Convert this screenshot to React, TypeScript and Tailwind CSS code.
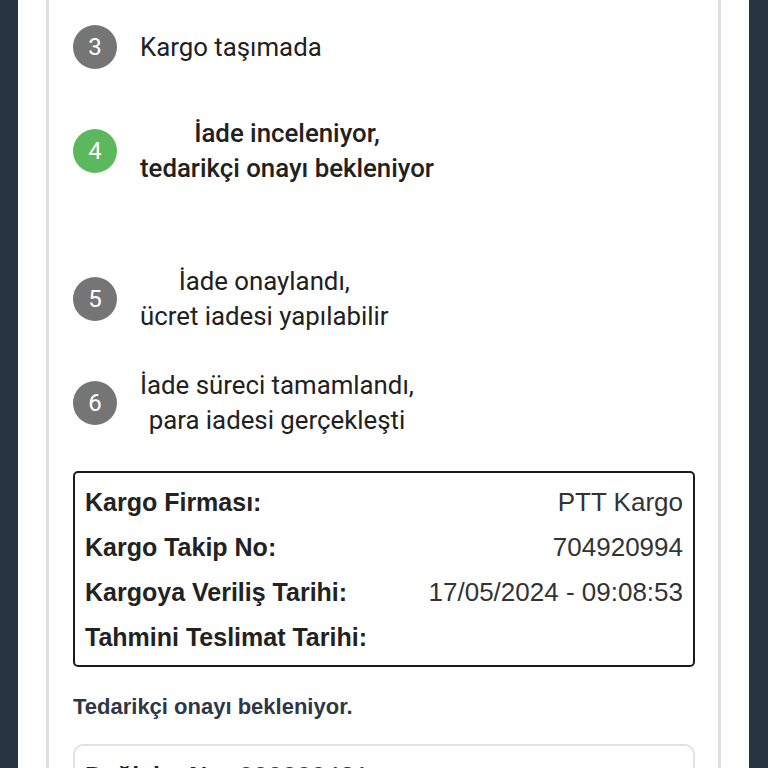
import React from "react";

const roboto = { fontFamily: "Roboto, 'Noto Sans', sans-serif" } as React.CSSProperties;
const arial = { fontFamily: "'Liberation Sans', Arial, sans-serif" } as React.CSSProperties;

function Circle({ n, active }: { n: number; active?: boolean }) {
  return (
    <div
      className={`w-[44px] h-[44px] rounded-full flex items-center justify-center text-white text-[24px] shrink-0 ${
        active ? "bg-[#5cb85c]" : "bg-[#757575]"
      }`}
      style={roboto}
    >
      {n}
    </div>
  );
}

function Step({
  n,
  lines,
  active,
  className,
}: {
  n: number;
  lines: string[];
  active?: boolean;
  className?: string;
}) {
  return (
    <div className={`flex items-center gap-[23px] ${className ?? ""}`}>
      <Circle n={n} active={active} />
      <div
        className={`text-center text-[25.8px] leading-[35px] text-[#212121] ${
          active ? "font-medium" : "font-normal"
        }`}
        style={roboto}
      >
        {lines.map((l) => (
          <div key={l}>{l}</div>
        ))}
      </div>
    </div>
  );
}

function Row({ label, value }: { label: string; value?: string }) {
  return (
    <div className="flex justify-between items-center h-[45px]">
      <span className="font-bold text-[25px] text-[#222]">{label}</span>
      <span className="text-[26px] text-[#333]">{value}</span>
    </div>
  );
}

export default function App() {
  return (
    <div className="h-[768px] overflow-hidden bg-[#283442] pl-[18px] pr-[19px]">
      <div className="h-full bg-white px-[28px]">
        <div className="h-full border-x-[3px] border-[#dedede] pl-6 pr-[23px] pt-[25px]">
          <Step n={3} lines={["Kargo taşımada"]} />
          <Step
            n={4}
            active
            lines={["İade inceleniyor,", "tedarikçi onayı bekleniyor"]}
            className="mt-[47px]"
          />
          <Step
            n={5}
            lines={["İade onaylandı,", "ücret iadesi yapılabilir"]}
            className="mt-[78px]"
          />
          <Step
            n={6}
            lines={["İade süreci tamamlandı,", "para iadesi gerçekleşti"]}
            className="mt-[34px]"
          />

          <div
            className="mt-[33px] border-2 border-[#1a1a1a] rounded-[5px] pl-[10px] pr-[10px] pt-[7px] pb-[5px]"
            style={arial}
          >
            <Row label="Kargo Firması:" value="PTT Kargo" />
            <Row label="Kargo Takip No:" value="704920994" />
            <Row label="Kargoya Veriliş Tarihi:" value="17/05/2024 - 09:08:53" />
            <Row label="Tahmini Teslimat Tarihi:" />
          </div>

          <div
            className="mt-[23px] font-bold text-[22px] text-[#2d3748]"
            style={arial}
          >
            Tedarikçi onayı bekleniyor.
          </div>

          <div
            className="mt-[21px] border-2 border-[#e2e2e2] rounded-[10px] pl-[10px] pr-[10px] pt-[8px] pb-3"
            style={arial}
          >
            <div className="flex items-center h-[45px] gap-2">
              <span className="font-bold text-[25px] text-[#222]">Değişim No:</span>
              <span className="text-[26px] text-[#333]">000000421</span>
            </div>
          </div>
        </div>
      </div>
    </div>
  );
}
